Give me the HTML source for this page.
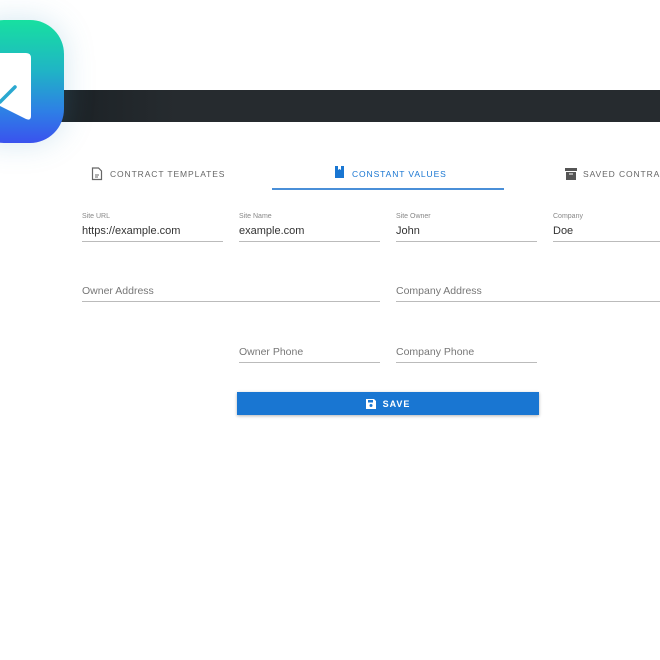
<!DOCTYPE html>
<html><head><style>
*{margin:0;padding:0;box-sizing:border-box}
body{width:660px;height:660px;background:#fff;position:relative;overflow:hidden;font-family:"Liberation Sans",sans-serif}
.bar{position:absolute;left:55px;top:90px;width:605px;height:32px;background:linear-gradient(90deg,#1b2125,#262b2f 20%,#262b2f)}
.logo{position:absolute;left:-30px;top:20px;width:94px;height:123px;border-radius:34px;background:linear-gradient(180deg,#17e0a0,#1fb6c4 40%,#2e7ee6 75%,#3a52ee);box-shadow:0 0 30px rgba(80,160,200,.25)}
.tab{position:absolute;top:169px;font-size:8.5px;letter-spacing:0.9px;color:#666;white-space:nowrap}
.f{position:absolute;border-bottom:1px solid #bbb}
.lab{position:absolute;font-size:7px;color:#888}
.val{position:absolute;font-size:11px;color:#333}
.ph{position:absolute;font-size:10.5px;color:#777}
</style></head><body>
<div class="bar"></div>
<div class="logo"></div>
<svg style="position:absolute;left:0;top:40px" width="40" height="90" viewBox="0 0 40 90">
<path d="M0 13 H26 Q31 13 31 18 V76 Q31 81 26 79 L0 66 Z" fill="#fff"/>
<path d="M0 62 L15 47" stroke="#2aa8d0" stroke-width="3.5" stroke-linecap="round"/>
</svg>
<svg style="position:absolute;left:91px;top:167px" width="12" height="14" viewBox="0 0 12 14"><path d="M1.5 1h6l3 3v8.5h-9z" fill="none" stroke="#666" stroke-width="1.2"/><path d="M4 8h4M4 10h3" stroke="#666"/></svg>
<div class="tab" style="left:110px">CONTRACT TEMPLATES</div>
<svg style="position:absolute;left:334px;top:166px" width="11" height="15" viewBox="0 0 11 15"><path d="M1 0h9v12h-9z" fill="#1976d2"/><path d="M4 0v4l1.5-1 1.5 1V0" fill="#fff"/></svg>
<div class="tab" style="left:352px;color:#1976d2">CONSTANT VALUES</div>
<div style="position:absolute;left:272px;top:188px;width:232px;height:2px;background:#4a8fd8"></div>
<svg style="position:absolute;left:565px;top:168px" width="12" height="12" viewBox="0 0 12 12"><path d="M0 0h12v3H0z M1 4h10v8H1z" fill="#555"/><path d="M4 6h4" stroke="#fff"/></svg>
<div class="tab" style="left:583px">SAVED CONTRACTS</div>

<div class="lab" style="left:82px;top:213px">Site URL</div><div class="val" style="left:82px;top:225px">https://example.com</div><div class="f" style="left:82px;top:241px;width:141px"></div>
<div class="lab" style="left:239px;top:213px">Site Name</div><div class="val" style="left:239px;top:225px">example.com</div><div class="f" style="left:239px;top:241px;width:141px"></div>
<div class="lab" style="left:396px;top:213px">Site Owner</div><div class="val" style="left:396px;top:225px">John</div><div class="f" style="left:396px;top:241px;width:141px"></div>
<div class="lab" style="left:553px;top:213px">Company</div><div class="val" style="left:553px;top:225px">Doe</div><div class="f" style="left:553px;top:241px;width:120px"></div>

<div class="ph" style="left:82px;top:285px">Owner Address</div><div class="f" style="left:82px;top:301px;width:298px"></div>
<div class="ph" style="left:396px;top:285px">Company Address</div><div class="f" style="left:396px;top:301px;width:280px"></div>

<div class="ph" style="left:239px;top:346px">Owner Phone</div><div class="f" style="left:239px;top:362px;width:141px"></div>
<div class="ph" style="left:396px;top:346px">Company Phone</div><div class="f" style="left:396px;top:362px;width:141px"></div>

<div style="position:absolute;left:237px;top:392px;width:302px;height:23px;background:#1976d2;box-shadow:0 1px 3px rgba(0,0,0,.3);color:#fff;font-size:9px;font-weight:bold;letter-spacing:1px;display:flex;align-items:center;justify-content:center;gap:7px">
<svg width="10" height="10" viewBox="0 0 10 10"><path d="M0 0h8l2 2v8H0z" fill="#fff"/><rect x="2" y="1" width="5" height="2.5" fill="#1976d2"/><circle cx="5" cy="6.5" r="1.5" fill="#1976d2"/></svg>SAVE</div>
</body></html>
